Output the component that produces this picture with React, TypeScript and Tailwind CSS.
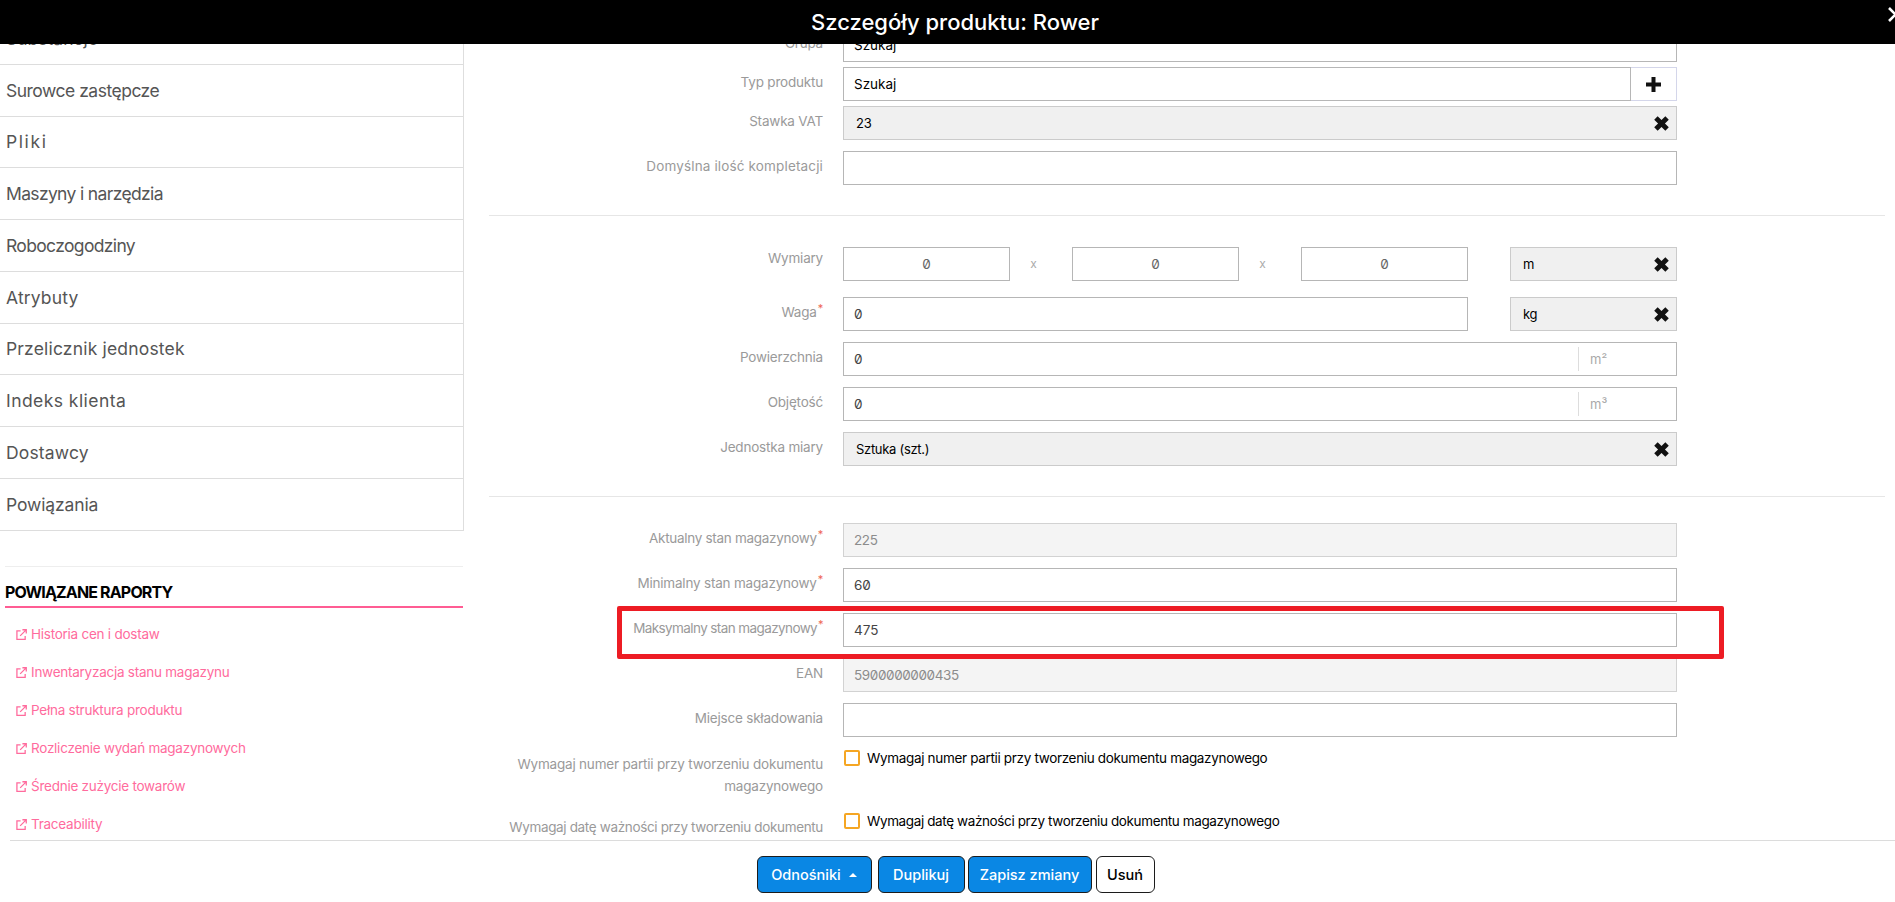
import React from "react";

function XMark() {
  return (
    <svg viewBox="0 0 14 14" width="15" height="15" fill="#111" className="shrink-0" aria-hidden="true">
      <path d="M3.4.2 7 3.8 10.6.2 13.8 3.4 10.2 7 13.8 10.6 10.6 13.8 7 10.2 3.4 13.8.2 10.6 3.8 7 .2 3.4Z" />
    </svg>
  );
}

function ExternalIcon() {
  return (
    <svg viewBox="0 0 12 12" width="11" height="11" fill="none" stroke="#ff6b9d" strokeWidth="1.4" className="shrink-0" aria-hidden="true">
      <path d="M5 2H1v9.2h9V7.5" />
      <path d="M4.5 7.5 10.8 1.2M7 .8h4.2V5" />
    </svg>
  );
}

function Field({ children, className = "", disabled }: { children?: React.ReactNode; className?: string; disabled?: boolean }) {
  const look = disabled
    ? "bg-[#f4f4f4] border-[#d2d2d2] text-[#8c8c8c] tracking-[-0.4px]"
    : "bg-white border-[#b6b6b6] text-[#444]";
  return (
    <div className={`h-[34px] border flex items-center px-[10px] text-[13.5px] slashed-zero ${look} ${className}`}>
      {children}
    </div>
  );
}

function Select({ children, className = "" }: { children?: React.ReactNode; className?: string }) {
  return (
    <div className={`h-[34px] border border-[#cbcbcb] bg-[#f0f0f0] flex items-center justify-between pl-[12px] pr-[7px] text-[13px] tracking-[-0.3px] text-black ${className}`}>
      <span className="pt-[1px]">{children}</span>
      <XMark />
    </div>
  );
}

function Row({
  label,
  req,
  mt,
  children,
  labelBox = "pt-[2px] leading-[26px]",
  track = "tracking-[-0.2px]",
}: {
  label: React.ReactNode;
  req?: boolean;
  mt: string;
  children: React.ReactNode;
  labelBox?: string;
  track?: string;
}) {
  return (
    <div className={`flex items-start gap-[20px] ${mt}`}>
      <div className={`w-[334px] shrink-0 text-right text-[13.5px] text-[#9a9a9a] ${labelBox} ${track}`}>
        {label}
        {req && <span className="text-[#ee6655] text-[11px] leading-none ml-[1px] relative top-[-5px]">*</span>}
      </div>
      <div className="w-[834px] shrink-0">{children}</div>
    </div>
  );
}

const menu = [
  { t: "Substancje", c: "tracking-[0px]" },
  { t: "Surowce zastępcze", c: "tracking-[-0.5px]" },
  { t: "Pliki", c: "tracking-[1.6px]" },
  { t: "Maszyny i narzędzia", c: "tracking-[-0.65px]" },
  { t: "Roboczogodziny", c: "tracking-[-0.65px]" },
  { t: "Atrybuty", c: "tracking-[0.15px]" },
  { t: "Przelicznik jednostek", c: "tracking-[0.18px]" },
  { t: "Indeks klienta", c: "tracking-[0.45px]" },
  { t: "Dostawcy", c: "tracking-[0.17px]" },
  { t: "Powiązania", c: "tracking-[-0.13px]" },
];

const reports = [
  "Historia cen i dostaw",
  "Inwentaryzacja stanu magazynu",
  "Pełna struktura produktu",
  "Rozliczenie wydań magazynowych",
  "Średnie zużycie towarów",
  "Traceability",
];

function Btn({ children, className = "" }: { children: React.ReactNode; className?: string }) {
  return (
    <button className={`h-[37px] rounded-[6px] border border-[#1c1c1c] text-[14.5px] font-medium flex items-center justify-center ${className}`}>
      {children}
    </button>
  );
}

const blue = "bg-[#0a87e4] text-white";

export default function App() {
  return (
    <div className="h-[902px] w-[1895px] overflow-hidden flex flex-col bg-white font-['Inter',sans-serif] relative">
      <header className="h-[44px] shrink-0 bg-black relative z-10 flex items-center justify-center overflow-hidden">
        <h1 className="text-white text-[22px] font-medium pl-[15px]">Szczegóły produktu: Rower</h1>
        <svg viewBox="0 0 15 15" width="15" height="15" className="absolute left-[1888px] top-[7px]" fill="none" stroke="#fff" strokeWidth="2.6" aria-hidden="true">
          <path d="M1 1l13 13M14 1 1 14" />
        </svg>
      </header>

      <div className="flex-1 min-h-0 flex overflow-hidden">
        <aside className="w-[489px] shrink-0">
          <nav className="w-[464px] -mt-[31px] border-r border-[#dedede]">
            {menu.map((m) => (
              <div key={m.t} className={`h-[51.75px] border-b border-[#dddddd] flex items-center pl-[6px] pt-[1px] text-[17.5px] text-[#555] ${m.c}`}>
                {m.t}
              </div>
            ))}
          </nav>
          <div className="w-[458px] ml-[5px] mt-[35px] border-t border-[#eeeeee]">
            <h2 className="text-[16px] font-bold text-black mt-[13px] leading-[24px] tracking-[-0.85px] border-b-2 border-[#ff5c93] pb-[2px]">POWIĄZANE RAPORTY</h2>
            <ul className="mt-[8px]">
              {reports.map((r) => (
                <li key={r} className="h-[38px] flex items-center gap-[4px] pl-[11px] text-[13.5px] tracking-[-0.25px] text-[#ff6b9d]">
                  <ExternalIcon />
                  {r}
                </li>
              ))}
            </ul>
          </div>
        </aside>

        <main className="flex-1 min-w-0 -mt-[16px]">
          <div className="w-[1396px]">
            <Row label="Grupa" mt=""><Field className="!text-black">Szukaj</Field></Row>
            <Row label="Typ produktu" mt="mt-[5px]">
              <div className="flex h-[34px]">
                <Field className="flex-1 !text-black">Szukaj</Field>
                <div className="w-[46px] border border-l-0 border-[#d4d6ea] flex items-center justify-center">
                  <svg viewBox="0 0 15 15" width="15" height="15" fill="#111" aria-hidden="true"><path d="M5.5 0h4v5.5H15v4H9.5V15h-4V9.5H0v-4h5.5Z" /></svg>
                </div>
              </div>
            </Row>
            <Row label="Stawka VAT" mt="mt-[5px]"><Select>23</Select></Row>
            <Row label="Domyślna ilość kompletacji" mt="mt-[11px]" track="tracking-[0.15px]"><Field /></Row>

            <div className="h-[1px] bg-[#e6e6e6] mt-[30px]" />

            <Row label="Wymiary" mt="mt-[31px]" labelBox="leading-[22px]">
              <div className="flex items-center">
                <Field className="w-[167px] justify-center !text-[#666]">0</Field>
                <span className="w-[62px] pr-[15px] text-center text-[12px] text-[#aaa]">x</span>
                <Field className="w-[167px] justify-center !text-[#666]">0</Field>
                <span className="w-[62px] pr-[15px] text-center text-[12px] text-[#aaa]">x</span>
                <Field className="w-[167px] justify-center !text-[#666]">0</Field>
                <Select className="w-[167px] ml-[42px]">m</Select>
              </div>
            </Row>
            <Row label="Waga" req mt="mt-[16px]">
              <div className="flex">
                <Field className="w-[625px]">0</Field>
                <Select className="w-[167px] ml-[42px]">kg</Select>
              </div>
            </Row>
            <Row label="Powierzchnia" mt="mt-[11px]">
              <Field className="justify-between !pr-0">
                <span>0</span>
                <span className="w-[98px] h-[24px] border-l border-[#dddddd] pl-[11px] text-[#aaa] text-[13px] leading-[24px]">m²</span>
              </Field>
            </Row>
            <Row label="Objętość" mt="mt-[11px]">
              <Field className="justify-between !pr-0">
                <span>0</span>
                <span className="w-[98px] h-[24px] border-l border-[#dddddd] pl-[11px] text-[#aaa] text-[13px] leading-[24px]">m³</span>
              </Field>
            </Row>
            <Row label="Jednostka miary" mt="mt-[11px]"><Select>Sztuka (szt.)</Select></Row>

            <div className="h-[1px] bg-[#e6e6e6] mt-[30px]" />

            <Row label="Aktualny stan magazynowy" req mt="mt-[26px]" track="tracking-[-0.3px]">
              <Field disabled>225</Field>
            </Row>
            <Row label="Minimalny stan magazynowy" req mt="mt-[11px]"><Field>60</Field></Row>
            <Row label="Maksymalny stan magazynowy" req mt="mt-[11px]" track="tracking-[-0.6px]"><Field>475</Field></Row>
            <Row label="EAN" mt="mt-[11px]">
              <Field disabled>5900000000435</Field>
            </Row>
            <Row label="Miejsce składowania" mt="mt-[11px]"><Field /></Row>
            <Row
              label={<>Wymagaj numer partii przy tworzeniu dokumentu<br />magazynowego</>}
              mt="mt-[13px]"
              labelBox="pt-[3px] leading-[22px]"
            >
              <div className="flex items-start gap-[7px] text-[13.5px] leading-[16px] tracking-[-0.33px] text-black pl-[1px]">
                <span className="w-[16px] h-[16px] border-2 border-[#f5a623] rounded-[2px] shrink-0" />
                Wymagaj numer partii przy tworzeniu dokumentu magazynowego
              </div>
            </Row>
            <Row
              label="Wymagaj datę ważności przy tworzeniu dokumentu"
              mt="mt-[16px]"
              labelBox="pt-[3px] leading-[22px]"
              track="tracking-[-0.35px]"
            >
              <div className="flex items-start gap-[7px] text-[13.5px] leading-[16px] tracking-[-0.38px] text-black pl-[1px]">
                <span className="w-[16px] h-[16px] border-2 border-[#f5a623] rounded-[2px] shrink-0" />
                Wymagaj datę ważności przy tworzeniu dokumentu magazynowego
              </div>
            </Row>
          </div>
        </main>
      </div>

      <footer className="h-[62px] shrink-0 ml-[10px] border-t border-[#dcdcdc] bg-white relative z-10 flex justify-center pt-[15px] pl-[6px]">
        <Btn className={`w-[115px] gap-[8px] mr-[6px] ${blue}`}>
          Odnośniki
          <span className="w-0 h-0 border-l-[4px] border-r-[4px] border-b-[4px] border-l-transparent border-r-transparent border-b-white" />
        </Btn>
        <Btn className={`w-[87px] mr-[3px] ${blue}`}>Duplikuj</Btn>
        <Btn className={`w-[124px] mr-[4px] ${blue}`}>Zapisz zmiany</Btn>
        <Btn className="w-[59px] bg-white text-black">Usuń</Btn>
      </footer>

      <div className="absolute left-[617px] top-[606px] w-[1107px] h-[53px] border-[5px] border-[#ed1c24] rounded-[2px] pointer-events-none z-20" />
    </div>
  );
}
